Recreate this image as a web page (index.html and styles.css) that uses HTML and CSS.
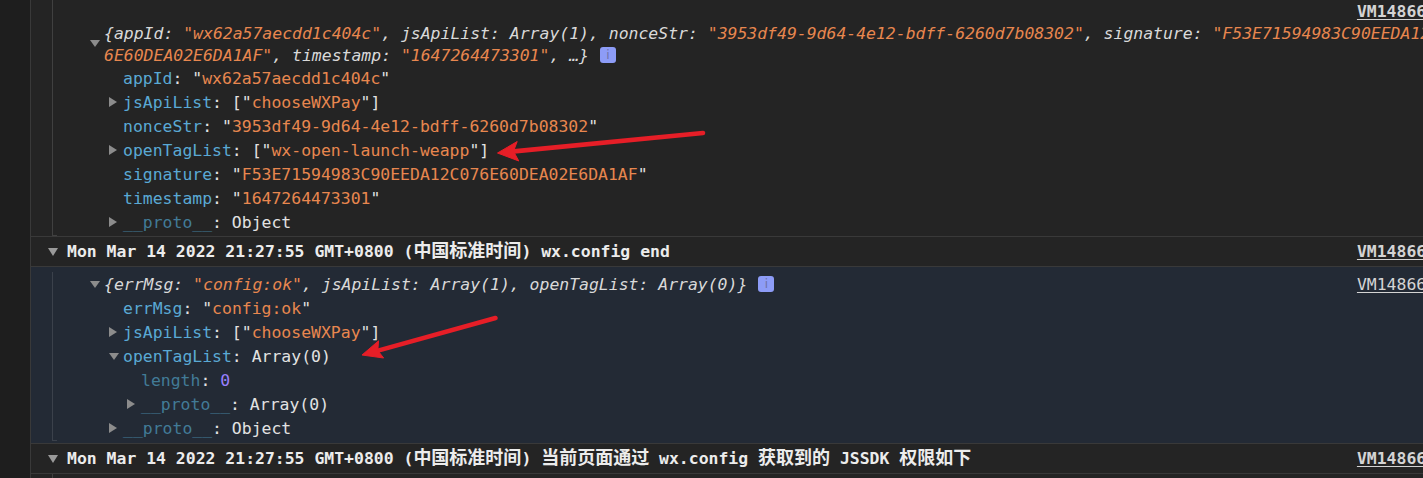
FILE: index.html
```html
<!DOCTYPE html>
<html>
<head>
<meta charset="utf-8">
<link rel="stylesheet" href="styles.css">
</head>
<body>
<div class="console">
  <div class="gutter"></div>
  <div class="messages">
    <div class="section">
      <div class="group-body">
        <div class="row link-row"><a class="src">VM14866:1</a></div>
        <div class="preview-block">
          <span class="tw tw-prev"><span class="tri-d small"></span></span>
          <div class="plines">
            <div class="pline">{<span class="pk">appId</span>: <span class="ps">"wx62a57aecdd1c404c"</span>, <span class="pk">jsApiList</span>: Array(1), <span class="pk">nonceStr</span>: <span class="ps">"3953df49-9d64-4e12-bdff-6260d7b08302"</span>, <span class="pk">signature</span>: <span class="ps">"F53E71594983C90EEDA12C07</span></div>
            <div class="pline"><span class="ps">6E60DEA02E6DA1AF"</span>, <span class="pk">timestamp</span>: <span class="ps">"1647264473301"</span>, …}<span class="badge">i</span></div>
          </div>
        </div>
        <div class="row ind1"><span class="tw"></span><span class="k">appId</span>: "<span class="s">wx62a57aecdd1c404c</span>"</div>
        <div class="row ind1"><span class="tw"><span class="tri-r"></span></span><span class="k">jsApiList</span>: ["<span class="s">chooseWXPay</span>"]</div>
        <div class="row ind1"><span class="tw"></span><span class="k">nonceStr</span>: "<span class="s">3953df49-9d64-4e12-bdff-6260d7b08302</span>"</div>
        <div class="row ind1"><span class="tw"><span class="tri-r"></span></span><span class="k">openTagList</span>: ["<span class="s">wx-open-launch-weapp</span>"]</div>
        <div class="row ind1"><span class="tw"></span><span class="k">signature</span>: "<span class="s">F53E71594983C90EEDA12C076E60DEA02E6DA1AF</span>"</div>
        <div class="row ind1"><span class="tw"></span><span class="k">timestamp</span>: "<span class="s">1647264473301</span>"</div>
        <div class="row ind1"><span class="tw"><span class="tri-r"></span></span><span class="k dim">__proto__</span>: Object</div>
      </div>
    </div>

    <div class="hdr">
      <span class="tw tw-hdr"><span class="tri-d"></span></span>
      <span class="hdr-text">Mon Mar 14 2022 21:27:55 GMT+0800 (<span class="cjk">中国标准时间</span>) wx.config end</span>
      <a class="src">VM14866:1</a>
    </div>

    <div class="section blue">
      <div class="group-body">
        <div class="row ind0">
          <span class="tw"><span class="tri-d small"></span></span>
          <span class="pline">{<span class="pk">errMsg</span>: <span class="ps">"config:ok"</span>, <span class="pk">jsApiList</span>: Array(1), <span class="pk">openTagList</span>: Array(0)}<span class="badge">i</span></span>
          <a class="src">VM14866:1</a>
        </div>
        <div class="row ind1"><span class="tw"></span><span class="k">errMsg</span>: "<span class="s">config:ok</span>"</div>
        <div class="row ind1"><span class="tw"><span class="tri-r"></span></span><span class="k">jsApiList</span>: ["<span class="s">chooseWXPay</span>"]</div>
        <div class="row ind1"><span class="tw"><span class="tri-d small"></span></span><span class="k">openTagList</span>: Array(0)</div>
        <div class="row ind2"><span class="tw"></span><span class="k dim">length</span>: <span class="n">0</span></div>
        <div class="row ind2"><span class="tw"><span class="tri-r"></span></span><span class="k dim">__proto__</span>: Array(0)</div>
        <div class="row ind1"><span class="tw"><span class="tri-r"></span></span><span class="k dim">__proto__</span>: Object</div>
      </div>
    </div>

    <div class="hdr">
      <span class="tw tw-hdr"><span class="tri-d"></span></span>
      <span class="hdr-text">Mon Mar 14 2022 21:27:55 GMT+0800 (<span class="cjk">中国标准时间</span>) <span class="cjk">当前页面通过</span> wx.config <span class="cjk">获取到的</span> JSSDK <span class="cjk">权限如下</span></span>
      <a class="src">VM14866:1</a>
    </div>

    <div class="section tail">
      <div class="group-body open"></div>
    </div>
  </div>
</div>

<svg class="annot" width="1423" height="478" viewBox="0 0 1423 478">
  <g fill="#e61e27" stroke="#e61e27">
    <line x1="703" y1="133" x2="514" y2="151.4" stroke-width="4.6" stroke-linecap="round"/>
    <polygon points="497.5,153 517.2,141.5 513.5,151.3 518.8,161" stroke-width="1" stroke-linejoin="round"/>
    <line x1="495.5" y1="318" x2="378" y2="350.6" stroke-width="4.6" stroke-linecap="round"/>
    <polygon points="362,355 378.6,340.8 377.8,350.5 383.6,358" stroke-width="1" stroke-linejoin="round"/>
  </g>
</svg>
</body>
</html>
```

FILE: styles.css
```css
* {
  box-sizing: border-box;
}

html,
body {
  margin: 0;
  padding: 0;
  background: #242424;
  overflow: hidden;
}

body {
  position: relative;
  width: 1423px;
  height: 478px;
  font-family: "DejaVu Sans Mono", "Noto Sans CJK SC", monospace;
  font-size: 16.45px;
  color: #e2e2e2;
}

.console {
  display: flex;
  width: 1460px;
  height: 478px;
}

.gutter {
  flex: none;
  width: 31px;
  background: #1e1e1e;
  border-right: 1px solid #393939;
}

.messages {
  flex: 1;
  display: flex;
  flex-direction: column;
  min-width: 0;
}

.section {
  padding-left: 21px;
}

.section.blue {
  background: #232a35;
  padding-top: 5px;
  padding-bottom: 2px;
}

.section.tail {
  flex: 1;
}

.group-body {
  position: relative;
  border-left: 1px solid #404040;
  padding-bottom: 2px;
}

.section.blue .group-body {
  border-left-color: #3b414b;
  padding-bottom: 1px;
}

.group-body::after {
  content: "";
  position: absolute;
  left: 0;
  bottom: 0;
  width: 4px;
  height: 1px;
  background: #404040;
}

.section.blue .group-body::after {
  background: #3b414b;
}

.group-body.open {
  height: 100%;
}

.group-body.open::after {
  display: none;
}

.row {
  display: flex;
  align-items: center;
  height: 24px;
  white-space: pre;
}

.link-row {
  height: 22px;
}

.ind0 {
  padding-left: 37px;
}

.ind1 {
  padding-left: 56px;
}

.ind2 {
  padding-left: 74px;
}

.tw {
  flex: none;
  display: flex;
  align-items: center;
  width: 14px;
  height: 100%;
}

.tw-hdr {
  width: 19px;
}

.tri-r {
  width: 0;
  height: 0;
  border-top: 5px solid transparent;
  border-bottom: 5px solid transparent;
  border-left: 8px solid #8c8c8c;
}

.tri-d {
  width: 0;
  height: 0;
  border-left: 5px solid transparent;
  border-right: 5px solid transparent;
  border-top: 8px solid #9a9a9a;
}

.tri-d.small {
  border-top: 7px solid #8c8c8c;
}

.preview-block {
  display: flex;
  padding-left: 37px;
}

.tw-prev {
  height: auto;
  align-items: flex-start;
  padding-top: 18px;
}

.plines {
  display: flex;
  flex-direction: column;
}

.pline {
  display: flex;
  align-items: center;
  height: 22px;
  white-space: pre;
  font-style: italic;
  color: #d9d9d9;
}

.row .pline {
  height: 24px;
}

.pk {
  color: #d9d9d9;
}

.ps {
  color: #e8874f;
}

.k {
  color: #5aa9d4;
}

.k.dim {
  color: #427b97;
}

.s {
  color: #e8874f;
}

.n {
  color: #9a80ff;
}

.badge {
  display: inline-flex;
  align-items: center;
  justify-content: center;
  width: 16px;
  height: 16px;
  margin-left: 11px;
  border-radius: 3px;
  background: #8d9cf7;
  color: #6d72a8;
  font-family: "DejaVu Sans", sans-serif;
  font-size: 12px;
  font-style: normal;
  line-height: 1;
}

.src {
  margin-left: auto;
  margin-right: 14px;
  color: #d4d4d4;
  text-decoration: underline;
  text-underline-offset: 2px;
  white-space: pre;
}

.link-row .src,
.hdr .src {
  font-weight: bold;
}

.hdr {
  display: flex;
  align-items: center;
  height: 31px;
  padding-left: 17px;
  border-top: 1px solid #393939;
  border-bottom: 1px solid #393939;
  font-weight: bold;
  color: #ececec;
  white-space: pre;
}

.hdr-text {
  line-height: 20px;
}

.cjk {
  font-family: "Noto Sans CJK SC", sans-serif;
  font-size: 18px;
  line-height: 0;
}

.annot {
  position: absolute;
  left: 0;
  top: 0;
  pointer-events: none;
}
```
